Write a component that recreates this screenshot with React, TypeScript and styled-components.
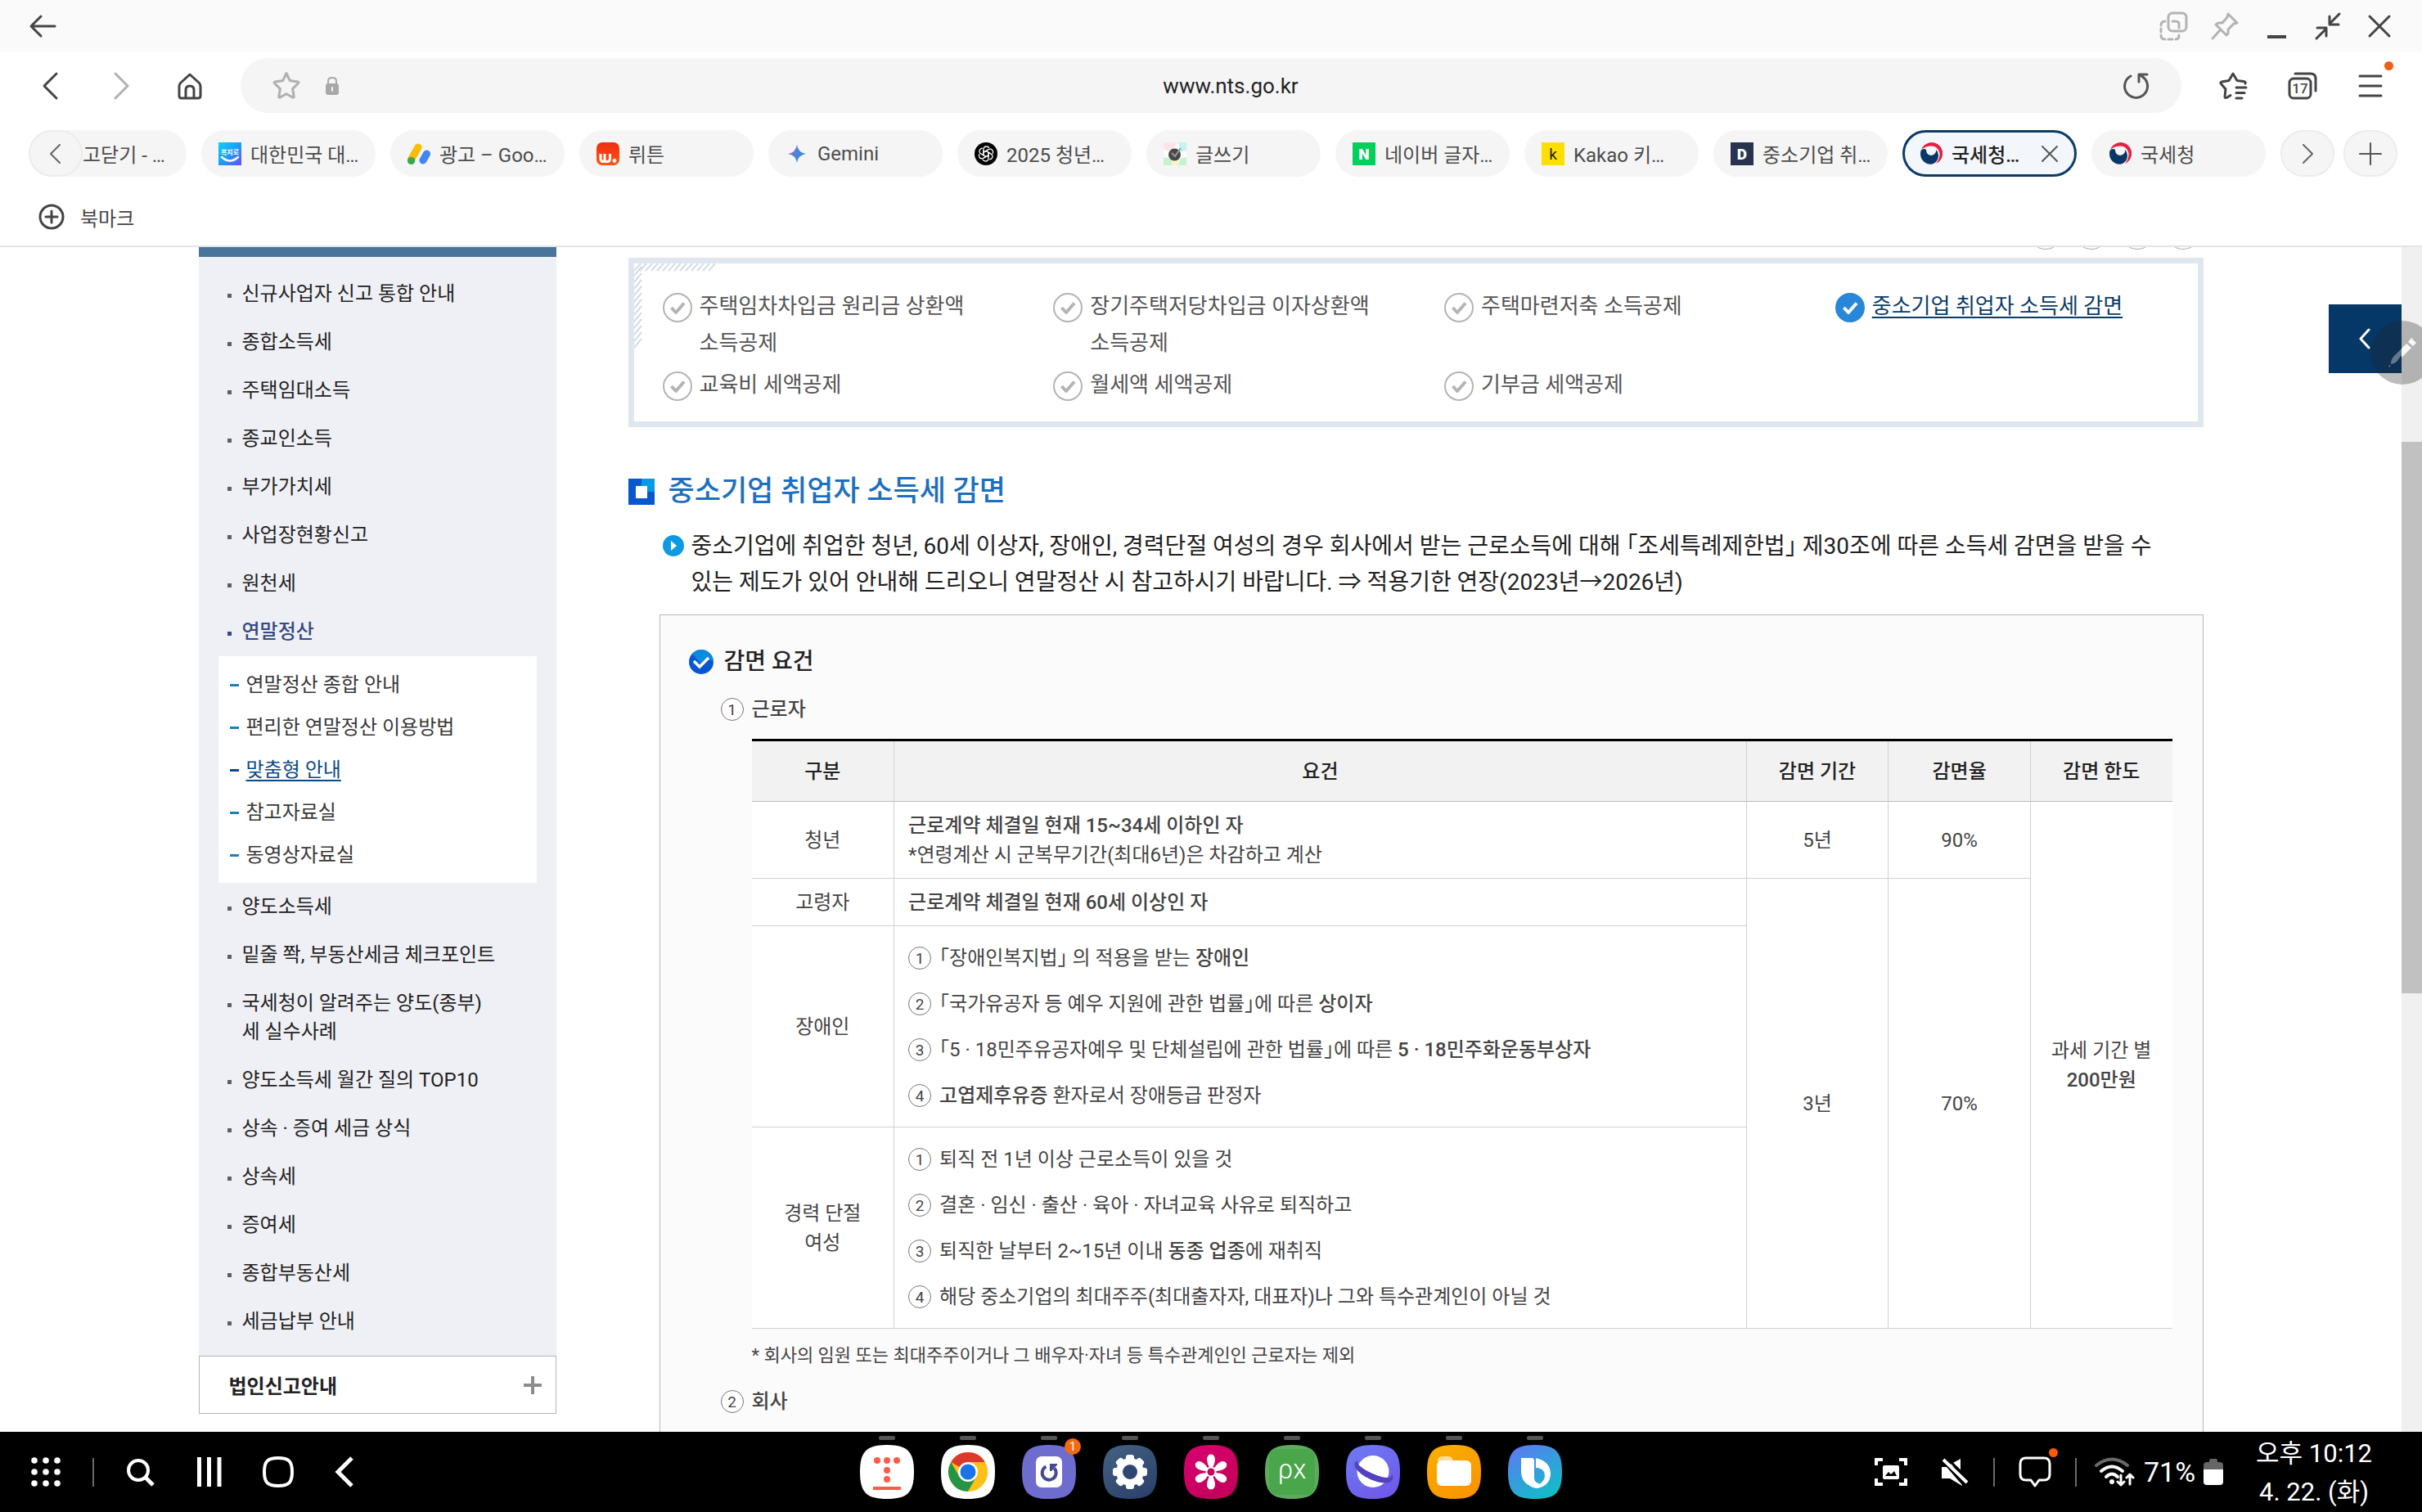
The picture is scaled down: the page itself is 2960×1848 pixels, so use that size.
import React from "react";
import styled, { createGlobalStyle, css } from "styled-components";

const GlobalStyle = createGlobalStyle`
  *, *::before, *::after { box-sizing: border-box; }
  body {
    margin: 0;
    background: #fff;
    color: #222;
    font-family: Roboto, "Noto Sans CJK KR", sans-serif;
    font-size: 24px;
    font-feature-settings: "halt";
    word-break: keep-all;
  }
  button, input { font: inherit; color: inherit; }
  button { padding: 0; border: 0; background: none; display: flex; align-items: center; justify-content: center; }
  a { color: inherit; text-decoration: none; }
  ul, ol { margin: 0; padding: 0; list-style: none; }
  h2, h3, p { margin: 0; }
  svg { display: block; flex: none; }
`;

/* ---------- frame ---------- */

const Screen = styled.div`
  height: 100vh;
  display: flex;
  flex-direction: column;
  overflow: hidden;
`;

const TitleBar = styled.header`
  flex: none;
  height: 63px;
  padding: 0 34px;
  display: flex;
  align-items: center;
  justify-content: space-between;
  background: #fafafa;
`;

const WindowButtons = styled.div`
  display: flex;
  gap: 27px;
`;

const Toolbar = styled.div`
  flex: none;
  padding: 8px 47px 0 43px;
  height: 75px;
  display: flex;
  align-items: center;
`;

const NavButtons = styled.div`
  display: flex;
  gap: 46px;
  margin-right: 43px;
`;

const AddressBar = styled.form`
  flex: 1;
  height: 67px;
  padding: 0 38px 0 36px;
  border-radius: 34px;
  background: #f5f5f5;
  display: flex;
  align-items: center;
  gap: 28px;
`;

const UrlInput = styled.input`
  flex: 1;
  min-width: 0;
  border: 0;
  background: none;
  text-align: center;
  font-size: 26px;
  color: #222;
`;

const ToolButtons = styled.div`
  display: flex;
  gap: 48px;
  margin-left: 45px;
`;

const IconButton = styled.button`
  position: relative;
`;

const NoticeDot = styled.span`
  position: absolute;
  top: -12px;
  right: -12px;
  width: 11px;
  height: 11px;
  border-radius: 50%;
  background: #ee5f14;
`;

const TabStrip = styled.nav`
  flex: none;
  padding: 21px 30px 0 35px;
  display: flex;
  gap: 18px;
`;

const TabItem = styled.button<{ $active?: boolean; $first?: boolean }>`
  flex: ${(p) => (p.$first ? "0 0 193px" : "1 1 0")};
  min-width: 0;
  height: 57px;
  padding: 0 21px;
  gap: 11px;
  justify-content: flex-start;
  border-radius: 29px;
  background: #f5f5f5;
  color: #4c4c4c;
  white-space: nowrap;
  ${(p) =>
    p.$first &&
    css`
      padding: 0;
      gap: 0;
    `}
  ${(p) =>
    p.$active &&
    css`
      padding: 0 18px;
      border: 3px solid #0b3c68;
      background: #f3f7fb;
      color: #222;
      font-weight: 500;
    `}
`;

const TabTitle = styled.span`
  flex: 1;
  text-align: left;
`;

const RoundEnd = styled.span`
  width: 66px;
  height: 57px;
  border-radius: 29px;
  border: 2px solid #ececec;
  background: #f5f5f5;
  display: flex;
  align-items: center;
  justify-content: center;
`;

const StripEnd = styled.div`
  display: flex;
  gap: 11px;
`;

const BookmarkBar = styled.div`
  flex: none;
  height: 86px;
  padding: 14px 46px 0;
  display: flex;
  align-items: center;
  color: #444;
  border-bottom: 2px solid #e4e4e4;
`;

const BookmarkButton = styled.button`
  gap: 18px;
`;

/* ---------- page ---------- */

const Viewport = styled.div`
  position: relative;
  flex: 1;
  min-height: 0;
  display: flex;
`;

const PageArea = styled.div`
  flex: 1;
  min-width: 0;
  overflow: hidden;
`;

const PageColumns = styled.div`
  max-width: 2450px;
  margin: 0 auto;
  display: flex;
  align-items: flex-start;
  gap: 88px;
`;

const ScrollTrack = styled.div`
  flex: none;
  width: 25px;
  padding-top: 238px;
  background: #f0f0f0;
`;

const ScrollThumb = styled.div`
  height: 674px;
  background: #c1c1c1;
`;

const QuickPanelButton = styled.button`
  position: absolute;
  top: 70px;
  right: 25px;
  width: 89px;
  height: 84px;
  background: #053767;
`;

const PenButton = styled.button`
  position: absolute;
  top: 90px;
  right: -15px;
  width: 78px;
  height: 78px;
  border-radius: 50%;
  background: rgba(38, 38, 38, 0.3);
`;

const Sidebar = styled.aside`
  flex: none;
  width: 437px;
  border-top: 12px solid #4a759b;
  background: #eff0f5;
`;

const SideList = styled.ul`
  padding: 16px 0 12px;
`;

const SideRow = styled.li<{ $active?: boolean }>`
  display: flex;
  align-items: flex-start;
  gap: 13px;
  padding: 12px 20px 12px 35px;
  line-height: 35px;
  color: ${(p) => (p.$active ? "#354a84" : "#222")};
  font-weight: ${(p) => (p.$active ? 500 : 400)};
  &::before {
    content: "";
    flex: none;
    width: 5px;
    height: 5px;
    margin-top: 17px;
    background: ${(p) => (p.$active ? "#354a84" : "#5f5f63")};
  }
`;

const SubList = styled.ul`
  margin: 0 24px;
  padding: 9px 14px 8px;
  background: #fff;
`;

const SubRow = styled.li<{ $active?: boolean }>`
  display: flex;
  align-items: center;
  gap: 9px;
  line-height: 52px;
  color: ${(p) => (p.$active ? "#0b4a86" : "#383838")};
  &::before {
    content: "";
    width: 11px;
    height: 3px;
    background: ${(p) => (p.$active ? "#0b4a86" : "#1a80b6")};
  }
  a {
    text-decoration: ${(p) => (p.$active ? "underline" : "none")};
    text-decoration-thickness: 2px;
    text-underline-offset: 4px;
  }
`;

const SideSection = styled.button`
  width: 100%;
  height: 71px;
  padding: 0 17px 0 36px;
  border: 1px solid #b3b5b9;
  background: #fff;
  justify-content: space-between;
  font-weight: 700;
`;

const Article = styled.main`
  flex: 1;
  min-width: 0;
`;

const ShareRow = styled.div`
  height: 3px;
  margin-bottom: 10px;
  padding-right: 3px;
  display: flex;
  justify-content: flex-end;
  align-items: flex-end;
  gap: 12px;
  overflow: hidden;
`;

const ShareCircle = styled.span`
  flex: none;
  width: 44px;
  height: 44px;
  border-radius: 50%;
  border: 1px solid #aaa;
`;

const TopicBox = styled.nav`
  position: relative;
  border: 7px solid #dfe6ee;
  padding: 30px 0 22px;
`;

const CornerHatch = styled.svg`
  position: absolute;
  top: 0;
  left: 0;
`;

const TopicGrid = styled.ul`
  display: grid;
  grid-template-columns: repeat(4, 1fr);
  row-gap: 6px;
`;

const TopicItem = styled.li<{ $active?: boolean }>`
  display: flex;
  align-items: flex-start;
  gap: 9px;
  padding-left: 35px;
  font-size: 26px;
  line-height: 45px;
  color: ${(p) => (p.$active ? "#0b3c68" : "#555")};
  svg { margin-top: 6px; }
  a {
    text-decoration: ${(p) => (p.$active ? "underline" : "none")};
    text-underline-offset: 4px;
    text-decoration-thickness: 2px;
  }
`;

const Title = styled.h2`
  margin-top: 54px;
  display: flex;
  align-items: center;
  gap: 17px;
  font-size: 35px;
  line-height: 50px;
  font-weight: 500;
  color: #1d6fc1;
`;

const Lead = styled.p`
  margin: 20px 0 17px;
  padding: 0 20px 0 42px;
  display: flex;
  align-items: flex-start;
  gap: 9px;
  font-size: 28px;
  line-height: 44px;
  color: #222;
  svg { margin-top: 8px; }
`;

const Panel = styled.section`
  margin-left: 38px;
  border: 1px solid #b9b9b9;
  background: #fbfbfb;
  padding: 37px 37px 60px 35px;
  color: #444;
`;

const PanelTitle = styled.h3`
  display: flex;
  align-items: center;
  gap: 13px;
  font-size: 28px;
  line-height: 40px;
  font-weight: 500;
  color: #222;
`;

const Step = styled.p`
  margin: 20px 0 18px;
  padding-left: 39px;
  display: flex;
  align-items: center;
  gap: 10px;
  line-height: 36px;
  font-weight: 500;
`;

const NumberRing = styled.span`
  flex: none;
  width: 28px;
  height: 28px;
  border: 1px solid #777;
  border-radius: 50%;
  background: #fff;
  text-align: center;
  font-size: 19px;
  line-height: 28px;
  font-weight: 400;
`;

const PanelBody = styled.div`
  padding-left: 77px;
`;

const RuleTable = styled.table`
  width: 100%;
  table-layout: fixed;
  border-collapse: separate;
  border-spacing: 0;
  border-top: 3px solid #000;
  background: #fff;
  line-height: 36px;
`;

const HeadCell = styled.th<{ $wide?: boolean }>`
  width: ${(p) => (p.$wide ? "60%" : "10%")};
  height: 74px;
  padding: 0;
  font-weight: 500;
  color: #222;
  background: #f2f2f2;
  border-bottom: 1px solid #b9b9b9;
  & + & { border-left: 1px solid #d0d0d0; }
`;

const Cell = styled.td<{ $center?: boolean; $edge?: boolean }>`
  padding: ${(p) => (p.$center ? "0 20px" : "11px 17px 10px")};
  text-align: ${(p) => (p.$center ? "center" : "left")};
  border-bottom: 1px solid #d0d0d0;
  border-left: ${(p) => (p.$edge ? "0" : "1px solid #d0d0d0")};
  strong { font-weight: 500; }
`;

const NumberedRow = styled.li`
  display: flex;
  align-items: center;
  gap: 10px;
  line-height: 56px;
`;

const Note = styled.p`
  margin-top: 15px;
  font-size: 22px;
  line-height: 36px;
`;

/* ---------- task bar ---------- */

const TaskBar = styled.footer`
  flex: none;
  height: 98px;
  padding: 0 61px 0 36px;
  display: grid;
  grid-template-columns: 1fr auto 1fr;
  background: #000;
  color: #fff;
`;

const TaskSide = styled.div<{ $end?: boolean }>`
  display: flex;
  align-items: center;
  justify-content: ${(p) => (p.$end ? "flex-end" : "flex-start")};
  gap: ${(p) => (p.$end ? 22 : 37)}px;
`;

const SystemButtons = styled.div`
  display: flex;
  align-items: center;
  gap: 44px;
`;

const TaskDivider = styled.span`
  width: 2px;
  height: 35px;
  background: #6a6a6a;
`;

const AppDock = styled.div`
  display: flex;
  gap: 33px;
  padding-top: 5px;
  padding-left: 25px;
`;

const AppButton = styled.button`
  position: relative;
  flex-direction: column;
  justify-content: flex-start;
  gap: 6px;
  &::before {
    content: "";
    width: 20px;
    height: 5px;
    border-radius: 2px;
    background: #555;
  }
`;

const AppBadge = styled.span`
  position: absolute;
  top: 3px;
  right: -6px;
  width: 20px;
  height: 20px;
  border-radius: 50%;
  background: #f26a13;
  font-size: 14px;
  line-height: 20px;
`;

const StatusGroup = styled.div<{ $gap: number }>`
  display: flex;
  align-items: center;
  gap: ${(p) => p.$gap}px;
`;

const MessageButton = styled.button`
  position: relative;
`;

const MessageDot = styled.span`
  position: absolute;
  top: -10px;
  right: -8px;
  width: 11px;
  height: 11px;
  border-radius: 50%;
  background: #ff5a00;
`;

const BatteryText = styled.span`
  font-size: 34px;
  line-height: 40px;
`;

const Clock = styled.time`
  margin-left: 18px;
  padding-top: 2px;
  text-align: center;
  font-size: 31px;
  line-height: 47px;
  white-space: nowrap;
`;

/* ---------- icons ---------- */

type IconProps = {
  w: number;
  h: number;
  stroke?: string;
  sw?: number;
  children: React.ReactNode;
};

const Icon = ({ w, h, stroke = "#444", sw = 3, children }: IconProps) => (
  <svg
    width={w}
    height={h}
    viewBox={`0 0 ${w} ${h}`}
    fill="none"
    stroke={stroke}
    strokeWidth={sw}
    strokeLinecap="round"
    strokeLinejoin="round"
    aria-hidden="true"
  >
    {children}
  </svg>
);

const starPath =
  "M17 2.5 L21.3 11.6 L31 13 Q32.6 13.4 31.4 14.8 L24.6 21.6 L26.2 31 Q26.2 32.6 24.7 32 L17 27.8 L9.3 32 Q7.8 32.6 7.8 31 L9.4 21.6 L2.6 14.8 Q1.4 13.4 3 13 L12.7 11.6 Z";

const CheckRing = ({ active }: { active?: boolean }) => (
  <Icon w={36} h={36} stroke={active ? "#fff" : "#b4b4b4"} sw={3}>
    <circle cx="18" cy="18" r={active ? 18 : 17} fill={active ? "#2987da" : "#fff"} stroke={active ? "none" : "#b4b4b4"} strokeWidth="2" />
    <path d="M10.5 18 L16 24 L26 12.5" strokeLinecap="butt" strokeWidth="4" />
  </Icon>
);

const TaegukIcon = () => (
  <svg width="28" height="28" viewBox="0 0 28 28" aria-hidden="true">
    <path d="M2 9 A13.500 13.500 0 1 1 20 26 Q25 20 24.500 13 Q22 3.500 13 4.500 Q6 5 2 9Z" fill="#e6213f" />
    <path d="M1.500 10 Q5 6.500 8 9 Q8 15 14 16 Q20 15 20.500 9 Q25 15 21.500 22 Q17 28.500 9 26 Q-1 21 1.500 10Z" fill="#0a3768" />
  </svg>
);

const LetterIcon = ({ letter, bg, fg, radius = 0, weight = 700 }: { letter: string; bg: string; fg: string; radius?: number; weight?: number }) => (
  <svg width="28" height="28" viewBox="0 0 28 28" aria-hidden="true">
    <rect width="28" height="28" rx={radius} fill={bg} />
    <text x="14" y="21" textAnchor="middle" fontSize="19" fontWeight={weight} fill={fg}>
      {letter}
    </text>
  </svg>
);

const WelfareIcon = () => (
  <svg width="28" height="28" viewBox="0 0 28 28" aria-hidden="true">
    <defs>
      <linearGradient id="welfare" x1="0" y1="0" x2="1" y2="1">
        <stop offset="0" stopColor="#0cd2fb" />
        <stop offset="0.5" stopColor="#1e9dfa" />
        <stop offset="1" stopColor="#6a4cf5" />
      </linearGradient>
    </defs>
    <rect width="28" height="28" fill="url(#welfare)" />
    <text x="14" y="15" textAnchor="middle" fontSize="8" fontWeight="700" fill="#fff">
      복지로
    </text>
    <path d="M4 18 Q14 27 24 18" fill="none" stroke="#fff" strokeWidth="2.4" strokeLinecap="round" />
  </svg>
);

const AdsIcon = () => (
  <svg width="28" height="28" viewBox="0 0 28 28" aria-hidden="true">
    <path d="M13 6 L4.500 21" stroke="#fbbc04" strokeWidth="9" strokeLinecap="round" />
    <path d="M23.500 14 L19 22" stroke="#4285f4" strokeWidth="9" strokeLinecap="round" />
    <circle cx="4.600" cy="22.500" r="4.600" fill="#34a853" />
  </svg>
);

const WrtnIcon = () => (
  <svg width="28" height="28" viewBox="0 0 28 28" aria-hidden="true">
    <defs>
      <linearGradient id="wrtn" x1="0" y1="0" x2="0" y2="1">
        <stop offset="0" stopColor="#ef2e12" />
        <stop offset="1" stopColor="#ff5512" />
      </linearGradient>
    </defs>
    <rect width="28" height="28" rx="7" fill="url(#wrtn)" />
    <path d="M5 14 V20 Q5 23.500 8 23.500 H10 V14 M10 23.500 H13 Q16.500 23.500 16.500 20 V14" fill="none" stroke="#fff" strokeWidth="3" />
    <circle cx="22" cy="22.500" r="2.400" fill="#fff" />
  </svg>
);

const GeminiIcon = () => (
  <svg width="28" height="28" viewBox="0 0 28 28" aria-hidden="true">
    <defs>
      <linearGradient id="gemini" x1="0" y1="0" x2="1" y2="0.3">
        <stop offset="0.2" stopColor="#8d6bc0" />
        <stop offset="0.7" stopColor="#3b8bd9" />
      </linearGradient>
    </defs>
    <path d="M14 3 Q15.500 12.500 25 14 Q15.500 15.500 14 25 Q12.500 15.500 3 14 Q12.500 12.500 14 3Z" fill="url(#gemini)" />
  </svg>
);

const GptIcon = () => (
  <svg width="28" height="28" viewBox="0 0 28 28" aria-hidden="true">
    <circle cx="14" cy="14" r="14" fill="#000" />
    <g fill="none" stroke="#fff" strokeWidth="1.300">
      {[0, 60, 120, 180, 240, 300].map((a) => (
        <path key={a} transform={`rotate(${a} 14 14)`} d="M11 15.700 V9 Q11 5 14.500 5 Q17 5 18 7 M14 10.500 L19.500 13.700" />
      ))}
    </g>
  </svg>
);

const WriteIcon = () => (
  <svg width="28" height="28" viewBox="0 0 28 28" aria-hidden="true">
    <rect width="28" height="28" fill="#fbfdfb" />
    <path d="M0 0 H18 L8 12 L0 8Z" fill="#fde4ea" />
    <path d="M18 0 H28 V10 L20 12Z" fill="#c4f3f1" />
    <path d="M0 28 V18 L10 20 V28Z M18 28 L20 20 L28 18 V28Z" fill="#c6f2cf" />
    <path d="M10 20 H18 V28 H10Z" fill="#fdf3c4" />
    <circle cx="13.500" cy="15" r="7.500" fill="#484848" />
    <path d="M10 13 L14 17 L21 7" fill="none" stroke="#999" strokeWidth="2" />
  </svg>
);

/* ---------- app launcher drawings ---------- */

const appShape = "M33 0 C58 0 66 8 66 33 C66 58 58 66 33 66 C8 66 0 58 0 33 C0 8 8 0 33 0Z";

const AppTile = ({ fill, children, id, to }: { fill: string; to?: string; id: string; children: React.ReactNode }) => (
  <svg width="66" height="66" viewBox="0 0 66 66" aria-hidden="true">
    <defs>
      <linearGradient id={id} x1="0.2" y1="0" x2="0.8" y2="1">
        <stop offset="0" stopColor={fill} />
        <stop offset="1" stopColor={to ?? fill} />
      </linearGradient>
    </defs>
    <path d={appShape} fill={`url(#${id})`} />
    {children}
  </svg>
);

const apps: { name: string; badge?: string; art: React.ReactNode }[] = [
  {
    name: "티스토리",
    art: (
      <AppTile id="a1" fill="#fff">
        <g fill="#ff5a4a">
          <circle cx="21" cy="19" r="4" />
          <circle cx="33" cy="19" r="4" />
          <circle cx="45" cy="19" r="4" />
          <circle cx="33" cy="31" r="4" />
          <circle cx="33" cy="42" r="4" />
          <rect x="16" y="51" width="34" height="4" />
        </g>
      </AppTile>
    ),
  },
  {
    name: "Chrome",
    art: (
      <AppTile id="a2" fill="#fff">
        <circle cx="33" cy="33" r="24" fill="#fbc116" />
        <path d="M33 33 L12.200 21 A24 24 0 0 1 53.800 21 Z" fill="#dd3a2e" />
        <path d="M12.200 21 A24 24 0 0 0 33 57 L43.400 39 L33 33 L22.600 39 Z" fill="#269447" />
        <path d="M33 21 H53.800 A24 24 0 0 1 33 57 L43.400 39 Z" fill="#fbc116" />
        <circle cx="33" cy="33" r="12" fill="#fff" />
        <circle cx="33" cy="33" r="9.500" fill="#1a73e8" />
      </AppTile>
    ),
  },
  {
    name: "업데이트",
    badge: "1",
    art: (
      <AppTile id="a3" fill="#6f6cd0">
        <rect x="17" y="14" width="32" height="38" rx="7" fill="#fff" />
        <path d="M29.500 26.500 A8.500 8.500 0 1 0 39.500 28.500" fill="none" stroke="#474a8c" strokeWidth="4" />
        <path d="M34 23 H43 V24.500 L36 32 H34Z" fill="#474a8c" />
      </AppTile>
    ),
  },
  {
    name: "설정",
    art: (
      <AppTile id="a4" fill="#41607f" to="#2b406b">
        <g fill="#fff">
          <circle cx="33" cy="33" r="17" />
          {[0, 45, 90, 135, 180, 225, 270, 315].map((a) => (
            <rect key={a} x="28" y="12" width="10" height="12" rx="3" transform={`rotate(${a} 33 33)`} />
          ))}
        </g>
        <circle cx="33" cy="33" r="9" fill="#2f4672" />
      </AppTile>
    ),
  },
  {
    name: "갤러리",
    art: (
      <AppTile id="a5" fill="#d8006e" to="#c2005a">
        <g fill="#fff">
          {[0, 60, 120, 180, 240, 300].map((a) => (
            <path key={a} d="M33 31 C27 22 26 12 33 11.500 C40 12 39 22 33 31Z" transform={`rotate(${a} 33 33)`} />
          ))}
          <circle cx="33" cy="33" r="6.500" />
        </g>
        <circle cx="33" cy="33" r="4.500" fill="#c8005f" />
      </AppTile>
    ),
  },
  {
    name: "픽셀",
    art: (
      <AppTile id="a6" fill="#5faa5f">
        <rect x="5" y="5" width="56" height="56" rx="10" fill="#4aa64a" />
        <text x="33" y="41" textAnchor="middle" fontSize="33" fontWeight="300" fill="#fff">
          ρx
        </text>
      </AppTile>
    ),
  },
  {
    name: "인터넷",
    art: (
      <AppTile id="a7" fill="#6e79f2" to="#6f58ea">
        <circle cx="33" cy="32.500" r="19.500" fill="#fff" />
        <path d="M15 19 C4 22 14 34 30 41 C48 48 62 47 56 35 C57 42 47 41 35 36 C22 31 10 22 15 19Z" fill="#5342c0" />
        <path d="M14 27 C20 37 42 47 54 43" fill="none" stroke="#5342c0" strokeWidth="5" />
      </AppTile>
    ),
  },
  {
    name: "내 파일",
    art: (
      <AppTile id="a8" fill="#f9ae00" to="#fb9200">
        <path d="M13 20 Q13 14 18 14 H27 Q31 14 32 20Z" fill="#fddc9f" />
        <rect x="12" y="19" width="42" height="31" rx="6" fill="#fff" />
      </AppTile>
    ),
  },
  {
    name: "빅스비",
    art: (
      <AppTile id="a9" fill="#5a7cf2" to="#0ec1c4">
        <path d="M16 16 H29 Q32 16 32 20 V40 Q32 46 38 47 Q34 53 29 51 Q16 46 16 32Z" fill="#fff" />
        <path d="M34 16 Q52 20 52 36 Q51 50 36 53 Q30 53 26 49 Q36 50 41 46 Q47 40 44 33 Q41 28 34 28Z" fill="#fff" />
      </AppTile>
    ),
  },
];

/* ---------- content ---------- */

const tabs: { title: string; icon: React.ReactNode; active?: boolean }[] = [
  { title: "대한민국 대…", icon: <WelfareIcon /> },
  { title: "광고 – Goo…", icon: <AdsIcon /> },
  { title: "뤼튼", icon: <WrtnIcon /> },
  { title: "Gemini", icon: <GeminiIcon /> },
  { title: "2025 청년…", icon: <GptIcon /> },
  { title: "글쓰기", icon: <WriteIcon /> },
  { title: "네이버 글자…", icon: <LetterIcon letter="N" bg="#04cf5c" fg="#fff" radius={1} weight={900} /> },
  { title: "Kakao 키…", icon: <LetterIcon letter="k" bg="#ffde00" fg="#222" weight={400} /> },
  { title: "중소기업 취…", icon: <LetterIcon letter="D" bg="#27334f" fg="#fff" weight={900} /> },
  { title: "국세청…", icon: <TaegukIcon />, active: true },
  { title: "국세청", icon: <TaegukIcon /> },
];

const menuTop = ["신규사업자 신고 통합 안내", "종합소득세", "주택임대소득", "종교인소득", "부가가치세", "사업장현황신고", "원천세"];
const menuSub = ["연말정산 종합 안내", "편리한 연말정산 이용방법", "맞춤형 안내", "참고자료실", "동영상자료실"];
const menuBottom: React.ReactNode[] = [
  "양도소득세",
  "밑줄 쫙, 부동산세금 체크포인트",
  <>
    국세청이 알려주는 양도(종부)
    <br />세 실수사례
  </>,
  "양도소득세 월간 질의 TOP10",
  "상속 · 증여 세금 상식",
  "상속세",
  "증여세",
  "종합부동산세",
  "세금납부 안내",
];

const topics = [
  "주택임차차입금 원리금 상환액 소득공제",
  "장기주택저당차입금 이자상환액 소득공제",
  "주택마련저축 소득공제",
  "중소기업 취업자 소득세 감면",
  "교육비 세액공제",
  "월세액 세액공제",
  "기부금 세액공제",
];

const disabledRules: React.ReactNode[] = [
  <>「장애인복지법」 의 적용을 받는 <strong>장애인</strong></>,
  <>「국가유공자 등 예우 지원에 관한 법률」에 따른 <strong>상이자</strong></>,
  <>「5 · 18민주유공자예우 및 단체설립에 관한 법률」에 따른 <strong>5 · 18민주화운동부상자</strong></>,
  <><strong>고엽제후유증</strong> 환자로서 장애등급 판정자</>,
];

const careerRules: React.ReactNode[] = [
  <>퇴직 전 1년 이상 근로소득이 있을 것</>,
  <>결혼 · 임신 · 출산 · 육아 · 자녀교육 사유로 퇴직하고</>,
  <>퇴직한 날부터 2~15년 이내 <strong>동종 업종</strong>에 재취직</>,
  <>해당 중소기업의 최대주주(최대출자자, 대표자)나 그와 특수관계인이 아닐 것</>,
];

const NumberedList = ({ items }: { items: React.ReactNode[] }) => (
  <ol>
    {items.map((item, i) => (
      <NumberedRow key={i}>
        <NumberRing>{i + 1}</NumberRing>
        <span>{item}</span>
      </NumberedRow>
    ))}
  </ol>
);

const BrowserChrome = () => (
  <>
    <TitleBar>
      <IconButton aria-label="뒤로">
        <Icon w={36} h={30}>
          <path d="M33 15 H4 M16 3 L4 15 L16 27" />
        </Icon>
      </IconButton>
      <WindowButtons>
        <IconButton aria-label="복사">
          <Icon w={36} h={36} stroke="#b3b3b3">
            <rect x="12" y="2" width="22" height="22" rx="5" />
            <path d="M8 12 Q3 12 3 17 M3 21 V25 M3 29 Q3 34 8 34 M12 34 H17 M21 34 Q25 34 25 29 M25 20 V15 Q25 12 20 12 H17" />
          </Icon>
        </IconButton>
        <IconButton aria-label="고정">
          <Icon w={36} h={36} stroke="#b3b3b3">
            <path d="M22 3 L33 14 L29 15 L22 22 Q23 27 20 29 L7 16 Q10 13 15 14 L21 7 Z M13 22 L3 33" />
          </Icon>
        </IconButton>
        <IconButton aria-label="최소화">
          <Icon w={36} h={36} sw={4}>
            <path d="M7 31 H30" strokeLinecap="butt" />
          </Icon>
        </IconButton>
        <IconButton aria-label="축소">
          <Icon w={36} h={36}>
            <path d="M32 3 L20 15 M20 6 V16 H31 M4 33 L16 21 M5 20 H16 V30" />
          </Icon>
        </IconButton>
        <IconButton aria-label="닫기">
          <Icon w={36} h={36}>
            <path d="M6 6 L30 30 M30 6 L6 30" />
          </Icon>
        </IconButton>
      </WindowButtons>
    </TitleBar>

    <Toolbar>
      <NavButtons>
        <IconButton aria-label="이전 페이지">
          <Icon w={36} h={36}>
            <path d="M26 3 L11 18 L26 33" />
          </Icon>
        </IconButton>
        <IconButton aria-label="다음 페이지">
          <Icon w={42} h={36} stroke="#b0b0b0">
            <path d="M16 3 L31 18 L16 33" />
          </Icon>
        </IconButton>
        <IconButton aria-label="홈">
          <Icon w={38} h={36}>
            <path d="M19 4 L30 14 Q32 16 32 18 V30 Q32 33 29 33 H9 Q6 33 6 30 V18 Q6 16 8 14 Z M14 33 V23 Q14 18 19 18 Q24 18 24 23 V33" />
          </Icon>
        </IconButton>
      </NavButtons>
      <AddressBar onSubmit={(e) => e.preventDefault()}>
        <IconButton type="button" aria-label="북마크 추가">
          <Icon w={38} h={36} stroke="#b0b0b0">
            <g transform="translate(3 0)">
              <path d={starPath} />
            </g>
          </Icon>
        </IconButton>
        <Icon w={20} h={24} stroke="#a8a8a8" sw={2}>
          <path d="M5 12 V6 Q5 2 10 2 Q15 2 15 6 V12" />
          <rect x="3" y="10" width="14" height="12" rx="2" fill="#a8a8a8" />
          <path d="M10 14 V18" stroke="#f5f5f5" />
        </Icon>
        <UrlInput aria-label="주소" defaultValue="www.nts.go.kr" />
        <IconButton type="button" aria-label="새로 고침">
          <Icon w={36} h={36} stroke="#555">
            <path d="M12 6 A14 14 0 1 0 29 9 L23 4 M22 13 V4 H32" />
          </Icon>
        </IconButton>
      </AddressBar>
      <ToolButtons>
        <IconButton aria-label="북마크 목록">
          <Icon w={36} h={36}>
            <path d="M33 15 Q34 13 31 12.500 L23 11.500 L18 3 L13 11.500 L4 13 Q2 14 3.500 15.500 L9 22 L8 31 Q8 33.500 11 32 L15 29.500 M22 20 H34 M22 26.500 H32 M22 33 H29" />
          </Icon>
        </IconButton>
        <IconButton aria-label="탭 17개">
          <svg width="38" height="36" viewBox="0 0 38 36" aria-hidden="true">
            <rect x="3" y="9" width="26" height="24" rx="5" fill="none" stroke="#444" strokeWidth="3" />
            <path d="M10 3 H29 Q35 3 35 9 V24" fill="none" stroke="#444" strokeWidth="3" strokeLinecap="round" />
            <text x="16" y="27" textAnchor="middle" fontSize="17" fontWeight="500" fill="#444">
              17
            </text>
          </svg>
        </IconButton>
        <IconButton aria-label="메뉴">
          <Icon w={32} h={36}>
            <path d="M3 6 H29 M3 18 H29 M3 30 H29" />
          </Icon>
          <NoticeDot />
        </IconButton>
      </ToolButtons>
    </Toolbar>

    <TabStrip>
      <TabItem $first>
        <RoundEnd>
          <Icon w={20} h={24} stroke="#666" sw={2}>
            <path d="M15 1 L4 12 L15 23" />
          </Icon>
        </RoundEnd>
        <TabTitle>고닫기 - …</TabTitle>
      </TabItem>
      {tabs.map((t, i) => (
        <TabItem key={i} $active={t.active}>
          {t.icon}
          <TabTitle>{t.title}</TabTitle>
          {t.active && (
            <Icon w={24} h={24} stroke="#555" sw={2}>
              <path d="M3 3 L21 21 M21 3 L3 21" />
            </Icon>
          )}
        </TabItem>
      ))}
      <StripEnd>
        <IconButton aria-label="다음 탭">
          <RoundEnd>
            <Icon w={20} h={24} stroke="#666" sw={2}>
              <path d="M5 1 L16 12 L5 23" />
            </Icon>
          </RoundEnd>
        </IconButton>
        <IconButton aria-label="새 탭">
          <RoundEnd>
            <Icon w={28} h={28} stroke="#555" sw={2}>
              <path d="M14 1 V27 M1 14 H27" />
            </Icon>
          </RoundEnd>
        </IconButton>
      </StripEnd>
    </TabStrip>

    <BookmarkBar>
      <BookmarkButton>
        <Icon w={34} h={34} sw={3}>
          <circle cx="17" cy="17" r="14" />
          <path d="M17 10 V24 M10 17 H24" />
        </Icon>
        북마크
      </BookmarkButton>
    </BookmarkBar>
  </>
);

const SideMenu = () => (
  <Sidebar>
    <SideList>
      {menuTop.map((m) => (
        <SideRow key={m}>
          <a href="#menu">{m}</a>
        </SideRow>
      ))}
      <SideRow $active>
        <a href="#menu">연말정산</a>
      </SideRow>
      <li>
        <SubList>
          {menuSub.map((m) => (
            <SubRow key={m} $active={m === "맞춤형 안내"}>
              <a href="#submenu">{m}</a>
            </SubRow>
          ))}
        </SubList>
      </li>
      {menuBottom.map((m, i) => (
        <SideRow key={i}>
          <a href="#menu">{m}</a>
        </SideRow>
      ))}
    </SideList>
    <SideSection>
      법인신고안내
      <Icon w={22} h={22} stroke="#8c8c8c" sw={4}>
        <path d="M11 0 V22 M0 11 H22" strokeLinecap="butt" />
      </Icon>
    </SideSection>
  </Sidebar>
);

const hatchTop = Array.from({ length: 14 }, (_, i) => `M${i * 7} 9 L${i * 7 + 8} 0`);
const hatchLeft = Array.from({ length: 12 }, (_, i) => `M0 ${i * 8 + 15} L9 ${i * 8 + 4}`);

const Content = () => (
  <Article>
    <ShareRow>
      <ShareCircle />
      <ShareCircle />
      <ShareCircle />
      <ShareCircle />
    </ShareRow>
    <TopicBox>
      <CornerHatch width="105" height="106" viewBox="0 0 105 106" aria-hidden="true">
        <path d={[...hatchTop, ...hatchLeft].join(" ")} stroke="#d3dce6" strokeWidth="2" fill="none" />
      </CornerHatch>
      <TopicGrid>
        {topics.map((t, i) => (
          <TopicItem key={t} $active={i === 3}>
            <CheckRing active={i === 3} />
            <a href="#topic">{t}</a>
          </TopicItem>
        ))}
      </TopicGrid>
    </TopicBox>

    <Title>
      <svg width="32" height="32" viewBox="0 0 32 32" aria-hidden="true">
        <rect width="32" height="32" fill="#0757cf" />
        <path d="M16 0 H32 V16 H16Z" fill="#0699e6" />
        <rect x="9" y="9" width="14" height="15" fill="#fff" />
      </svg>
      중소기업 취업자 소득세 감면
    </Title>
    <Lead>
      <svg width="26" height="26" viewBox="0 0 26 26" aria-hidden="true">
        <circle cx="13" cy="13" r="13" fill="#0d9ae4" />
        <path d="M10 7 L17 13 L10 19Z" fill="#fff" />
      </svg>
      <span>
        중소기업에 취업한 청년, 60세 이상자, 장애인, 경력단절 여성의 경우 회사에서 받는 근로소득에 대해 「조세특례제한법」 제30조에 따른 소득세 감면을 받을 수 있는 제도가 있어 안내해
        드리오니 연말정산 시 참고하시기 바랍니다. ⇒ 적용기한 연장(2023년→2026년)
      </span>
    </Lead>

    <Panel>
      <PanelTitle>
        <svg width="30" height="30" viewBox="0 0 30 30" aria-hidden="true">
          <circle cx="15" cy="15" r="15" fill="#0657cf" />
          <path d="M4 5 A15 15 0 0 1 30 15 L22 10 L14 17Z" fill="#0a8be2" />
          <path d="M6 14 L13 21 L24 10" fill="none" stroke="#fff" strokeWidth="3.500" />
        </svg>
        감면 요건
      </PanelTitle>
      <Step>
        <NumberRing>1</NumberRing>
        근로자
      </Step>
      <PanelBody>
        <RuleTable>
          <thead>
            <tr>
              <HeadCell>구분</HeadCell>
              <HeadCell $wide>요건</HeadCell>
              <HeadCell>감면 기간</HeadCell>
              <HeadCell>감면율</HeadCell>
              <HeadCell>감면 한도</HeadCell>
            </tr>
          </thead>
          <tbody>
            <tr>
              <Cell $center $edge>청년</Cell>
              <Cell>
                <strong>근로계약 체결일 현재 15~34세 이하인 자</strong>
                <br />
                *연령계산 시 군복무기간(최대6년)은 차감하고 계산
              </Cell>
              <Cell $center>5년</Cell>
              <Cell $center>90%</Cell>
              <Cell $center rowSpan={4}>
                과세 기간 별<br />
                <strong>200만원</strong>
              </Cell>
            </tr>
            <tr>
              <Cell $center $edge>고령자</Cell>
              <Cell>
                <strong>근로계약 체결일 현재 60세 이상인 자</strong>
              </Cell>
              <Cell $center rowSpan={3}>3년</Cell>
              <Cell $center rowSpan={3}>70%</Cell>
            </tr>
            <tr>
              <Cell $center $edge>장애인</Cell>
              <Cell>
                <NumberedList items={disabledRules} />
              </Cell>
            </tr>
            <tr>
              <Cell $center $edge>
                경력 단절
                <br />
                여성
              </Cell>
              <Cell>
                <NumberedList items={careerRules} />
              </Cell>
            </tr>
          </tbody>
        </RuleTable>
        <Note>* 회사의 임원 또는 최대주주이거나 그 배우자·자녀 등 특수관계인인 근로자는 제외</Note>
      </PanelBody>
      <Step>
        <NumberRing>2</NumberRing>
        회사
      </Step>
    </Panel>
  </Article>
);

const BottomBar = () => (
  <TaskBar>
    <TaskSide>
      <IconButton aria-label="모든 앱">
        <svg width="40" height="40" viewBox="0 0 40 40" fill="#fff" aria-hidden="true">
          {[6, 20, 34].map((y) => [6, 20, 34].map((x) => <circle key={`${x}-${y}`} cx={x} cy={y} r="3.800" />))}
        </svg>
      </IconButton>
      <TaskDivider />
      <SystemButtons>
        <IconButton aria-label="검색">
          <Icon w={38} h={38} stroke="#fff" sw={4}>
            <circle cx="17" cy="17" r="12" />
            <path d="M25.500 25.500 L35 35" strokeLinecap="butt" strokeWidth="5" />
          </Icon>
        </IconButton>
        <IconButton aria-label="최근 앱">
          <Icon w={42} h={40} stroke="#fff" sw={5}>
            <path d="M9.500 2 V38 M21.500 2 V38 M34 2 V38" strokeLinecap="butt" />
          </Icon>
        </IconButton>
        <IconButton aria-label="홈">
          <Icon w={40} h={40} stroke="#fff" sw={4}>
            <path d="M20 3 C33 3 37 7 37 20 C37 33 33 37 20 37 C7 37 3 33 3 20 C3 7 7 3 20 3Z" />
          </Icon>
        </IconButton>
        <IconButton aria-label="뒤로">
          <Icon w={36} h={40} stroke="#fff" sw={5}>
            <path d="M26 3 L9 20 L26 37" strokeLinecap="butt" strokeLinejoin="miter" />
          </Icon>
        </IconButton>
      </SystemButtons>
    </TaskSide>

    <AppDock>
      {apps.map((a) => (
        <AppButton key={a.name} aria-label={a.name}>
          {a.art}
          {a.badge && <AppBadge>{a.badge}</AppBadge>}
        </AppButton>
      ))}
    </AppDock>

    <TaskSide $end>
      <StatusGroup $gap={29}>
        <StatusGroup $gap={40}>
          <Icon w={40} h={36} stroke="#fff" sw={4}>
            <path d="M2 10 V3 H10 M30 3 H38 V10 M38 26 V33 H30 M10 33 H2 V26" strokeLinejoin="miter" strokeLinecap="butt" />
            <rect x="10" y="10" width="20" height="17" rx="2" fill="#fff" stroke="none" />
            <path d="M13 23 L17 18 L20 21 L24 17 L27 23Z" fill="#000" stroke="none" />
          </Icon>
          <Icon w={36} h={36} stroke="none">
            <path d="M2 12 H8 L27 34 V35 L12 26 H2Z M12 9 L25 2 V16Z" fill="#fff" />
            <path d="M4 3 L33 31" stroke="#fff" strokeWidth="4" strokeLinecap="butt" />
            <path d="M8 1 L35 27" stroke="#000" strokeWidth="3" strokeLinecap="butt" />
          </Icon>
        </StatusGroup>
        <TaskDivider />
        <MessageButton aria-label="알림">
          <Icon w={40} h={38} stroke="#fff" sw={3}>
            <path d="M9 2 H31 Q38 2 38 9 V22 Q38 29 31 29 H25 L20 36 L15 29 H9 Q2 29 2 22 V9 Q2 2 9 2Z" />
          </Icon>
          <MessageDot />
        </MessageButton>
        <TaskDivider />
      </StatusGroup>
      <StatusGroup $gap={10}>
        <Icon w={50} h={36} stroke="#fff" sw={4}>
          <path d="M2 10 Q21 -5 40 10" stroke="#6a6a6a" />
          <path d="M8 17 Q21 6 34 17 M14 24 Q21 17 28 24" />
          <circle cx="21" cy="30" r="3" fill="#fff" stroke="none" />
          <path d="M32 22 V34 M28 30 L32 34 L36 30 M43 33 V21 M39 25 L43 21 L47 25" strokeWidth="3" />
        </Icon>
        <BatteryText>71%</BatteryText>
        <svg width="24" height="32" viewBox="0 0 24 32" aria-hidden="true">
          <path d="M7 4 V2 Q7 0 9 0 H15 Q17 0 17 2 V4 H20 Q24 4 24 8 V13 H0 V8 Q0 4 4 4Z" fill="#666" />
          <path d="M0 13 H24 V28 Q24 32 20 32 H4 Q0 32 0 28Z" fill="#fff" />
        </svg>
      </StatusGroup>
      <Clock>
        오후 10:12
        <br />
        4. 22. (화)
      </Clock>
    </TaskSide>
  </TaskBar>
);

const App = () => (
  <Screen>
    <GlobalStyle />
    <BrowserChrome />
    <Viewport>
      <PageArea>
        <PageColumns>
          <SideMenu />
          <Content />
        </PageColumns>
      </PageArea>
      <ScrollTrack>
        <ScrollThumb />
      </ScrollTrack>
      <QuickPanelButton aria-label="퀵 메뉴 열기">
        <Icon w={20} h={26} stroke="#fff" sw={3}>
          <path d="M14 2 L4 13 L14 24" />
        </Icon>
      </QuickPanelButton>
      <PenButton aria-label="펜">
        <Icon w={40} h={40} stroke="none">
          <path d="M4 38 L3 36 L6 35Z M6 34 Q6 28 10 24 L19 15 V23 L13 31 Q10 34 6 34Z" fill="rgba(255,255,255,0.35)" />
          <path d="M19 15 L25 9 L31 14 L19 26Z M27 7 L31 2 L37 8 L33 12Z" fill="rgba(255,255,255,0.9)" />
        </Icon>
      </PenButton>
    </Viewport>
    <BottomBar />
  </Screen>
);

export default App;
